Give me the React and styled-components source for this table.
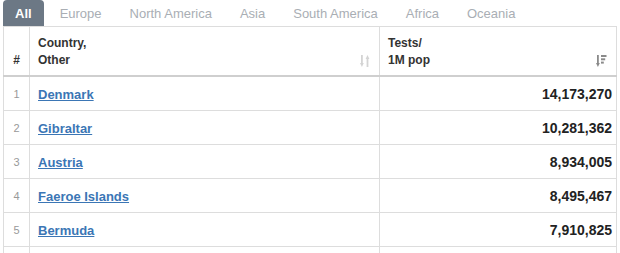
import React from "react";
import styled, { createGlobalStyle } from "styled-components";

const Global = createGlobalStyle`
  html, body { margin: 0; padding: 0; background: #fff; }
  body { font-family: "Liberation Sans", Arial, sans-serif; }
`;

const Wrap = styled.div`
  width: 620px;
  height: 253px;
  overflow: hidden;
  padding: 0 3px;
  box-sizing: border-box;
`;

const Tabs = styled.ul`
  display: flex;
  list-style: none;
  margin: 0;
  padding: 0;
  height: 26px;
  border-bottom: 1px solid #ddd;
`;

const Tab = styled.li`
  height: 26px;
  line-height: 27px;
  padding: 0 12px;
  margin-right: 4px;
  font-size: 13px;
  border-radius: 4px 4px 0 0;
  color: ${(p) => (p.$active ? "#fff" : "#a9aeb4")};
  background: ${(p) => (p.$active ? "#6c7885" : "transparent")};
  font-weight: ${(p) => (p.$active ? "bold" : "normal")};
`;

const Table = styled.table`
  width: 614px;
  border-collapse: collapse;
  table-layout: fixed;
  font-family: "Liberation Sans", Arial, sans-serif;
`;

const Th = styled.th`
  position: relative;
  height: 42px;
  padding: 0 8px 6px;
  border: 1px solid #ddd;
  border-top: none;
  border-bottom: 2px solid #cfcfcf;
  text-align: ${(p) => p.$align || "left"};
  vertical-align: bottom;
  font-size: 12px;
  font-weight: bold;
  line-height: 17px;
  color: #333;
`;

const SortIcon = styled.span`
  position: absolute;
  right: 9px;
  bottom: 8px;
  display: flex;
`;

const Td = styled.td`
  height: 33px;
  padding: 0 8px;
  border: 1px solid #ddd;
  vertical-align: middle;
  text-align: ${(p) => p.$align || "left"};
`;

const Num = styled(Td)`
  font-size: 11px;
  color: #999;
  text-align: center;
  padding: 0;
`;

const Link = styled.a`
  color: #3b76b5;
  font-weight: bold;
  font-size: 13px;
  text-decoration: underline;
`;

const Value = styled(Td)`
  font-size: 14px;
  font-weight: bold;
  color: #222;
  padding-right: 4px;
`;

const SortBoth = () => (
  <svg width="10" height="12" viewBox="0 0 10 12">
    <g fill="#d4d4d4">
      <rect x="1" y="0" width="1.8" height="9" />
      <polygon points="0,8 3.8,8 1.9,12" />
      <rect x="6.6" y="3" width="1.8" height="9" />
      <polygon points="5.6,4 9.4,4 7.5,0" />
    </g>
  </svg>
);

const SortDesc = () => (
  <svg width="11" height="12" viewBox="0 0 11 12">
    <g fill="#8a8a8a">
      <rect x="1" y="0" width="1.8" height="9" />
      <polygon points="0,8 3.8,8 1.9,12" />
      <rect x="5" y="0" width="5.5" height="2" />
      <rect x="5" y="3.3" width="4.2" height="2" />
      <rect x="5" y="6.6" width="2.8" height="2" />
    </g>
  </svg>
);

const tabs = ["All", "Europe", "North America", "Asia", "South America", "Africa", "Oceania"];
const rows = [
  ["Denmark", "14,173,270"],
  ["Gibraltar", "10,281,362"],
  ["Austria", "8,934,005"],
  ["Faeroe Islands", "8,495,467"],
  ["Bermuda", "7,910,825"],
  ["", ""],
];

export default function App() {
  return (
    <Wrap>
      <Global />
      <Tabs>
        {tabs.map((t, i) => (
          <Tab key={t} $active={i === 0}>{t}</Tab>
        ))}
      </Tabs>
      <Table>
        <colgroup>
          <col style={{ width: 26 }} />
          <col style={{ width: 350 }} />
          <col />
        </colgroup>
        <thead>
          <tr>
            <Th $align="center" style={{ padding: "0 0 6px" }}>#</Th>
            <Th>
              Country,<br />Other
              <SortIcon><SortBoth /></SortIcon>
            </Th>
            <Th>
              Tests/<br />1M pop
              <SortIcon><SortDesc /></SortIcon>
            </Th>
          </tr>
        </thead>
        <tbody>
          {rows.map(([c, v], i) => (
            <tr key={i}>
              <Num>{c ? i + 1 : ""}</Num>
              <Td>{c && <Link href="#">{c}</Link>}</Td>
              <Value $align="right">{v}</Value>
            </tr>
          ))}
        </tbody>
      </Table>
    </Wrap>
  );
}
